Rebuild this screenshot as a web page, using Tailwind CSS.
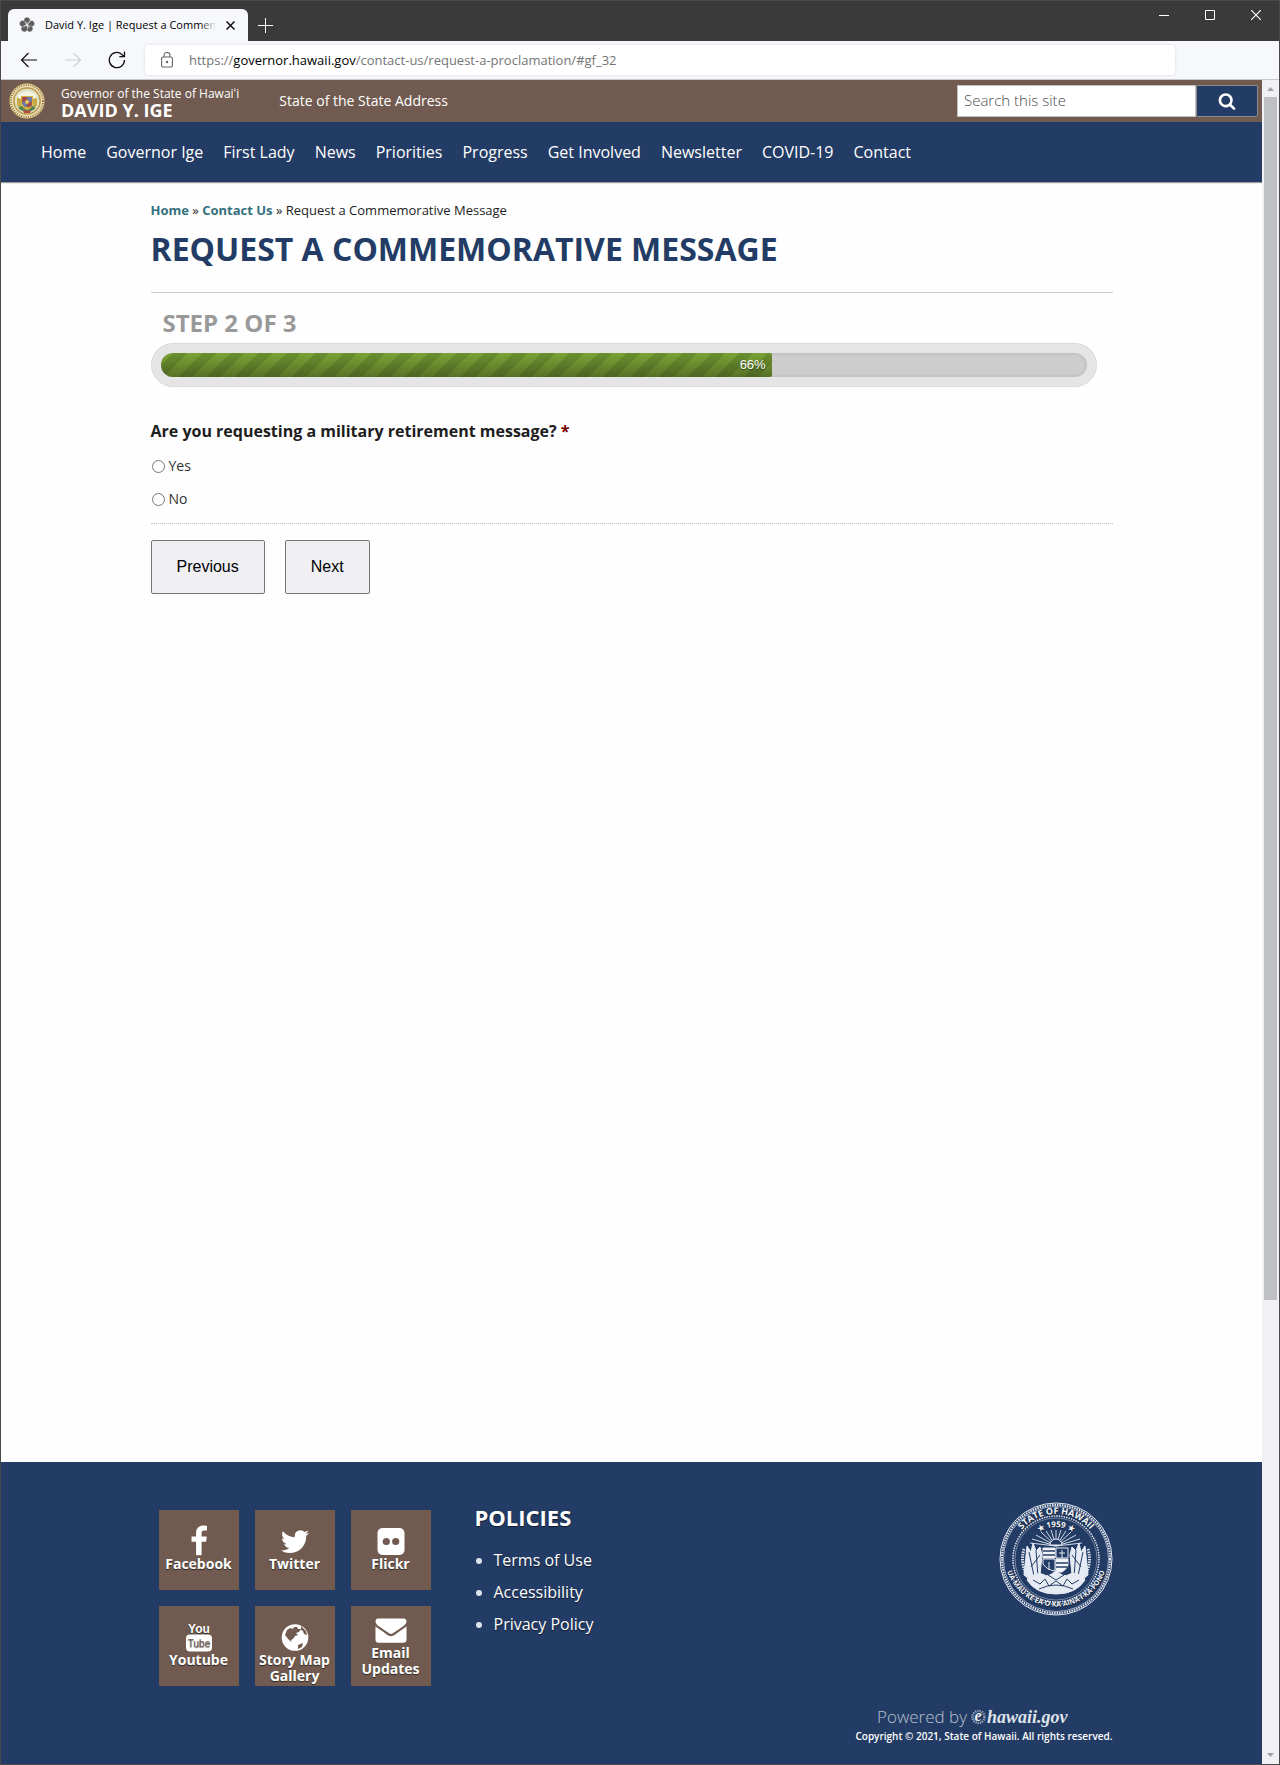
<!DOCTYPE html>
<html lang="en">
<head>
<meta charset="utf-8">
<meta name="viewport" content="width=device-width, initial-scale=1">
<title>David Y. Ige | Request a Commemorative Message</title>
<script src="https://cdn.jsdelivr.net/npm/@tailwindcss/browser@4"></script>
</head>
<body class="flex min-h-screen flex-col border border-[#4a4a4a] bg-[#fefefe] font-['Open_Sans',sans-serif] text-[#1d1d1d]">

<!-- Browser tab strip -->
<div class="flex h-10 items-end justify-between bg-[#3a3a3a]">
  <div class="flex items-end pl-[7px]">
    <div class="flex h-8 w-[240px] items-center rounded-t-md bg-[#f7f8fb] pr-2 pl-[11px]">
      <svg class="size-4 shrink-0" viewBox="0 0 16 16" fill="#5c5c5c" aria-hidden="true">
        <g stroke="#f7f8fb" stroke-width=".3">
          <ellipse cx="8" cy="3.900" rx="3.200" ry="3.600"/>
          <ellipse cx="8" cy="3.900" rx="3.200" ry="3.600" transform="rotate(72 8 8)"/>
          <ellipse cx="8" cy="3.900" rx="3.200" ry="3.600" transform="rotate(144 8 8)"/>
          <ellipse cx="8" cy="3.900" rx="3.200" ry="3.600" transform="rotate(216 8 8)"/>
          <ellipse cx="8" cy="3.900" rx="3.200" ry="3.600" transform="rotate(288 8 8)"/>
        </g>
        <path d="M8 8 12 3.500M8 8l-2-3M8 8l3 2M8 8 4.500 9M8 8l1 3.500" stroke="#f7f8fb" stroke-width=".8"/>
      </svg>
      <div class="relative ml-[10px] min-w-0 flex-1 overflow-hidden text-[11px] leading-4 whitespace-nowrap text-black">
        David Y. Ige | Request a Commemorative Message
        <span class="absolute inset-y-0 right-0 w-4 bg-linear-to-r from-transparent to-[#f7f8fb]"></span>
      </div>
      <button class="ml-1 flex size-5 items-center justify-center" aria-label="Close tab">
        <svg class="size-[9px]" viewBox="0 0 9 9" stroke="#111" stroke-width="1.500"><path d="M.5.5l8 8M8.500.5l-8 8"/></svg>
      </button>
    </div>
    <button class="ml-px flex size-8 items-center justify-center" aria-label="New tab">
      <svg class="size-[15px]" viewBox="0 0 15 15" stroke="#fff"><path d="M7.500 0v15M0 7.500h15"/></svg>
    </button>
  </div>
  <div class="flex h-full items-start">
    <button class="flex h-7 w-[46px] items-center justify-center" aria-label="Minimize">
      <svg class="size-[10px]" viewBox="0 0 10 10" stroke="#fff"><path d="M0 5.500h10"/></svg>
    </button>
    <button class="flex h-7 w-[46px] items-center justify-center" aria-label="Maximize">
      <svg class="size-[10px]" viewBox="0 0 10 10" stroke="#fff" fill="none"><path d="M.5.5h9v9h-9z"/></svg>
    </button>
    <button class="flex h-7 w-[46px] items-center justify-center" aria-label="Close window">
      <svg class="size-[10px]" viewBox="0 0 10 10" stroke="#fff" stroke-width="1.200"><path d="M0 0l10 10M10 0 0 10"/></svg>
    </button>
  </div>
</div>

<!-- Address bar -->
<div class="flex h-[39px] items-center border-b border-[#c8c9cb] bg-[#f7f8fb]">
  <div class="flex items-center pl-[6px]">
    <button class="flex w-11 justify-center" aria-label="Back">
      <svg class="h-4 w-[18px]" viewBox="0 0 18 16" fill="none" stroke="#111" stroke-width="1.200"><path d="M17 8H1.500M8.500 1l-7 7 7 7"/></svg>
    </button>
    <button class="flex w-11 justify-center" aria-label="Forward" disabled>
      <svg class="h-4 w-[18px]" viewBox="0 0 18 16" fill="none" stroke="#cfd0d3" stroke-width="1.200"><path d="M1 8h15.500M9.500 1l7 7-7 7"/></svg>
    </button>
    <button class="flex w-11 justify-center" aria-label="Refresh">
      <svg class="size-[18px]" viewBox="0 0 18 18" fill="none" stroke="#111" stroke-width="1.300"><path d="M16.500 9A7.600 7.600 0 1 1 13.700 3.200l2.300 2.300M16.500.5v5.200h-5.200"/></svg>
    </button>
  </div>
  <div class="ml-[6px] flex h-[30px] flex-1 items-center rounded bg-white pl-4 shadow-[0_0_3px_rgba(0,0,0,0.12)]">
    <svg class="h-4 w-3" viewBox="0 0 12 16" fill="none" stroke="#666" stroke-width="1.100" aria-hidden="true"><rect x=".6" y="5" width="10.800" height="10" rx="1.500"/><path d="M3 5V3.500a3 3 0 0 1 6 0V5"/><circle cx="6" cy="10" r=".7" fill="#555"/></svg>
    <div class="ml-4 pt-px text-[13px] whitespace-nowrap text-[#757575]">https://<span class="text-black">governor.hawaii.gov</span>/contact-us/request-a-proclamation/#gf_32</div>
  </div>
  <div class="w-[104px]"></div>
</div>

<div class="flex flex-1">
<div class="flex min-w-0 flex-1 flex-col">

  <header>
    <div class="flex h-[42px] items-center justify-between bg-[#715b50] pr-1 pl-2 text-white">
      <div class="flex items-center">
        <svg class="size-9" viewBox="0 0 36 36" role="img" aria-label="State seal">
          <circle cx="18" cy="18" r="17.700" fill="#cda863"/>
          <circle cx="18" cy="18" r="15.500" fill="none" stroke="#efe2b8" stroke-width="3"/>
          <circle cx="18" cy="18" r="16" fill="none" stroke="#8a7340" stroke-width="1.800" stroke-dasharray="1 1.300"/>
          <circle cx="18" cy="18" r="13" fill="#dfe3c4" stroke="#b5903e"/>
          <path d="M8 13q10-9 20 0l-4 3H12z" fill="#f6f4e4"/>
          <path d="M8 15l4 1v9l-4-2zM28 15l-4 1v9l4-2z" fill="#c9a646"/>
          <path d="M9 25q9 8 18 0l-3-2H12z" fill="#58834e"/>
          <path d="M12 13h12v8q-2 5-6 6-4-1-6-6z" fill="#d8b13c"/>
          <path d="M13 14h5v5h-5zM18 19h5v3l-2 2h-3z" fill="#a14e4c"/>
          <path d="M18 14h5v5h-5zM13 19h5v5h-2l-3-3z" fill="#6c7bab"/>
          <circle cx="18" cy="19" r="2" fill="#e8c556"/>
          <path d="M14 27l4 1 4-1-1 3h-6z" fill="#b94b45"/>
        </svg>
        <div class="ml-4 pt-px leading-4 whitespace-nowrap">
          <div class="text-xs leading-4">Governor of the State of Hawaiʻi</div>
          <div class="text-lg leading-4 font-bold">DAVID Y. IGE</div>
        </div>
        <a href="#" class="ml-10 text-sm font-medium whitespace-nowrap">State of the State Address</a>
      </div>
      <form class="flex h-8">
        <input type="search" aria-label="Search this site" placeholder="Search this site" class="w-[239px] border border-[#c2c2c2] bg-white px-[6px] pb-[2px] text-[15px] font-light text-black placeholder:text-[#4d4d4d]">
        <button type="button" aria-label="Search" class="flex w-[62px] items-center justify-center rounded-xs border border-[#8b8b8b] bg-[#233c65]">
          <svg class="size-[18px]" viewBox="0 0 1792 1792" fill="#fff"><path d="M1216 832q0-185-131.500-316.500t-316.500-131.500-316.500 131.500-131.500 316.500 131.500 316.500 316.500 131.500 316.500-131.500 131.500-316.500zm512 832q0 52-38 90t-90 38q-54 0-90-38l-343-342q-179 124-399 124-143 0-273.500-55.500t-225-150-150-225-55.500-273.500 55.500-273.500 150-225 225-150 273.500-55.500 273.500 55.500 225 150 150 225 55.500 273.500q0 220-124 399l343 343q37 37 37 90z"/></svg>
        </button>
      </form>
    </div>
    <nav class="flex h-[60px] items-center gap-5 bg-[#233c65] px-10 text-base whitespace-nowrap text-white shadow-[0_1px_1px_#999]">
      <a href="#">Home</a>
      <a href="#">Governor Ige</a>
      <a href="#">First Lady</a>
      <a href="#">News</a>
      <a href="#">Priorities</a>
      <a href="#">Progress</a>
      <a href="#">Get Involved</a>
      <a href="#">Newsletter</a>
      <a href="#">COVID-19</a>
      <a href="#">Contact</a>
    </nav>
  </header>

  <main class="mx-auto w-full max-w-[962px] flex-1 pt-[18px]">
    <div class="text-[13px] leading-5"><a href="#" class="font-bold text-[#35707f]">Home</a> » <a href="#" class="font-bold text-[#35707f]">Contact Us</a> » Request a Commemorative Message</div>
    <h1 class="mt-[7px] border-b border-[#cacaca] pb-[21px] text-[32px] leading-[44px] font-bold text-[#233c65]">REQUEST A COMMEMORATIVE MESSAGE</h1>
    <form>
      <h2 class="mt-[14px] ml-3 text-2xl leading-8 font-bold text-[#999]">STEP 2 OF 3</h2>
      <div class="mt-1 mr-4 rounded-full border border-[#d9dad9] bg-[#e4e5e4] p-[9px]">
        <div class="h-6 overflow-hidden rounded-full bg-[#cccdcc] shadow-[inset_0_0_2px_2px_rgba(0,0,0,0.05)]">
          <div class="flex h-full items-center justify-end rounded-r-xs bg-[linear-gradient(to_bottom,transparent,rgba(0,0,0,0.3)),repeating-linear-gradient(-45deg,#7ba336_0px,#7ba336_10px,#6c9030_10px,#6c9030_20px)] pr-[6px] font-['Liberation_Sans',sans-serif] text-[13px] text-white text-shadow-[0_1px_1px_rgba(0,0,0,0.5)]" style="width:66%">66%</div>
        </div>
      </div>
      <fieldset class="mt-8 border-b border-dotted border-[#c0c0c0] pb-[14px]">
        <legend class="text-base leading-6 font-bold">Are you requesting a military retirement message? <span class="text-[#790000]">*</span></legend>
        <div class="mt-3 flex flex-col gap-3 text-sm leading-[21px] text-[#333]">
          <label class="flex items-center gap-1"><input type="radio" name="military" class="mt-[2px] ml-px size-[13px]">Yes</label>
          <label class="flex items-center gap-1"><input type="radio" name="military" class="mt-[2px] ml-px size-[13px]">No</label>
        </div>
      </fieldset>
      <div class="mt-4 flex gap-5 font-['Liberation_Sans',sans-serif] text-base text-black">
        <button type="button" class="h-[54px] rounded-xs border border-[#767676] bg-[#efeff4] px-[25px]">Previous</button>
        <button type="button" class="h-[54px] rounded-xs border border-[#767676] bg-[#efeff4] px-[25px]">Next</button>
      </div>
    </form>
  </main>

  <footer class="bg-[#233c65] pb-[22px] text-white text-shadow-[0_1px_1px_rgba(0,0,0,0.6)]">
    <div class="mx-auto max-w-[962px]">
      <div class="flex items-start pt-10">
        <div class="mt-2 ml-2 grid grid-cols-3 gap-4 text-center text-sm leading-4 font-bold">
          <a href="#" class="flex size-20 flex-col items-center bg-[#715b50] pt-[14px]">
            <svg class="size-8" viewBox="0 0 1792 1792" fill="#fff" aria-hidden="true"><path transform="translate(0 90)" d="M1343 12v264h-157q-86 0-116 36t-30 108v189h293l-39 296h-254v759h-306v-759h-255v-296h255v-218q0-186 104-288.500t277-102.500q147 0 228 12z"/></svg>
            Facebook</a>
          <a href="#" class="flex size-20 flex-col items-center bg-[#715b50] pt-[14px]">
            <svg class="size-8" viewBox="0 0 1792 1792" fill="#fff" aria-hidden="true"><path transform="translate(0 90)" d="M1684 408q-67 98-162 167 1 14 1 42 0 130-38 259.500t-115.500 248.500-184.500 210.500-258 146-323 54.500q-271 0-496-145 35 4 78 4 225 0 401-138-105-2-188-64.500t-114-159.500q33 5 61 5 43 0 85-11-112-23-185.500-111.500t-73.500-205.500v-4q68 38 146 41-66-44-105-115t-39-154q0-88 44-163 121 149 294.500 238.500t371.500 99.500q-8-38-8-74 0-134 94.500-228.500t228.500-94.500q140 0 236 102 109-21 205-78-37 115-142 178 93-10 186-50z"/></svg>
            Twitter</a>
          <a href="#" class="flex size-20 flex-col items-center bg-[#715b50] pt-[14px]">
            <svg class="size-8" viewBox="0 0 32 32" fill="#fff" aria-hidden="true"><rect x="2.500" y="4" width="27" height="27" rx="5"/><circle cx="11.300" cy="17.500" r="3.600" fill="#715b50"/><circle cx="20.700" cy="17.500" r="3.600" fill="#715b50"/></svg>
            Flickr</a>
          <a href="#" class="flex size-20 flex-col items-center bg-[#715b50] pt-[14px]">
            <svg class="size-8" viewBox="0 0 32 32" aria-hidden="true"><text x="16" y="13" text-anchor="middle" font-family="Liberation Sans" font-weight="700" font-size="12" fill="#fff">You</text><rect x="3" y="14.500" width="26" height="17" rx="4" fill="#fff"/><text x="16" y="27" text-anchor="middle" font-family="Liberation Sans" font-weight="400" font-size="10" fill="#715b50">Tube</text></svg>
            Youtube</a>
          <a href="#" class="flex size-20 flex-col items-center bg-[#715b50] pt-[14px]">
            <svg class="size-8" viewBox="0 0 32 32" aria-hidden="true"><circle cx="16" cy="17.500" r="13.300" fill="#fff"/><path d="M8 10l3-2 3 1 1-2 3 0 1 2 3 0-2 3-3 1 2 2-3 1-2 3-2 1 1 2-3-2-4-5z" fill="#715b50"/><path d="M22 6l5 5 1 4-3-1-1-3-2-1z" fill="#715b50"/><path d="M19 25l5-2-1 4-4 2z" fill="#715b50"/></svg>
            Story Map Gallery</a>
          <a href="#" class="flex size-20 flex-col items-center bg-[#715b50] pt-2">
            <svg class="h-[31px] w-8 shrink-0" viewBox="0 0 1792 1792" fill="#fff" aria-hidden="true"><path d="M1792 710v794q0 66-47 113t-113 47h-1472q-66 0-113-47t-47-113v-794q44 49 101 87 362 246 497 345 57 42 92.500 65.500t94.500 48 110 24.500h2q51 0 110-24.500t94.500-48 92.500-65.500q170-123 498-345 57-39 100-87zm0-294q0 79-49 151t-122 123q-376 261-468 325-10 7-42.500 31t-54 38.500-52 32.500-57.500 27-50 9h-2q-23 0-50-9t-57.500-27-52-32.500-54-38.500-42.500-31q-91-64-262-182.500t-205-142.500q-62-42-117-115.500t-55-136.500q0-78 41.500-130t118.500-52h1472q65 0 112.500 47t47.500 113z"/></svg>
            Email Updates</a>
        </div>
        <div class="ml-11">
          <h2 class="text-[22px] leading-[30px] font-bold">POLICIES</h2>
          <ul class="mt-3 list-disc pl-[19px] text-base leading-8 marker:text-[#dfe3ee]">
            <li><a href="#">Terms of Use</a></li>
            <li><a href="#">Accessibility</a></li>
            <li><a href="#">Privacy Policy</a></li>
          </ul>
        </div>
        <svg class="ml-auto size-[114px]" viewBox="0 0 114 114" fill="none" stroke="#e6eaf2" role="img" aria-label="Seal of the State of Hawaii">
          <defs>
            <path id="arcTop" d="M12 57a45 45 0 0 1 90 0"/>
            <path id="arcYear" d="M25 57a32 32 0 0 1 64 0"/>
            <path id="arcBottom" d="M6 46a51.500 51.500 0 1 0 102 0"/>
          </defs>
          <circle cx="57" cy="57" r="56" stroke-width="1"/>
          <circle cx="57" cy="57" r="54" stroke-width="2" stroke-dasharray="1.500 1"/>
          <circle cx="57" cy="57" r="52.500" stroke-width=".6"/>
          <circle cx="57" cy="57" r="43" stroke-width="1.500" stroke-dasharray="1.500 1"/>
          <circle cx="57" cy="57" r="41" stroke-width=".4"/>
          <g fill="#f2f4f8" stroke="none" font-family="Open Sans, sans-serif" font-weight="700">
            <text font-size="9"><textPath href="#arcTop" startOffset="50%" text-anchor="middle">STATE  OF  HAWAII</textPath></text>
            <text font-size="8"><textPath href="#arcYear" startOffset="50%" text-anchor="middle">★ 1959 ★</textPath></text>
            <text font-size="7"><textPath href="#arcBottom" startOffset="50%" text-anchor="middle">UA·MAU·KE·EA·O·KA·AINA·I·KA·PONO</textPath></text>
          </g>
          <path d="M57 44 33 37M57 44 37 33M57 44 42 30M57 44 47 29M57 44 52 28M57 44V28M57 44l5-16M57 44l10-15M57 44l15-14M57 44l20-11M57 44l24-7M57 44 31 41M57 44l26-3" stroke-width=".9"/>
          <path d="M51 43a6 6 0 0 1 12 0z" fill="#233c65"/>
          <path d="M44 46h12v10H44zM57 57h12v6q-2 5-6 7h-6z" fill="#f2f4f8"/>
          <path d="M44 49h12M44 53h12M57 61h12M57 65h11" stroke="#233c65" stroke-width="1.300"/>
          <path d="M57 46h12v10H57zM44 57h12v12q-8-1-12-7zM63 48v8M50 60v8M60 51h6" fill="#233c65"/>
          <path d="M28 44l4 6 2-9 3 8 4-4 2 8-2 20-7 6-9-6zM86 44l-4 6-2-9-3 8-4-4-2 8 2 20 7 6 9-6z" fill="#e6eaf2"/>
          <path d="M30 50l5 24M37 48l2 27M32 65l9-12M84 50l-5 24M77 48l-2 27M82 65l-9-12" stroke="#233c65" stroke-width="1"/>
          <path d="M25 47q-5 17 7 33M89 47q5 17-7 33" stroke-width="3" stroke-dasharray="1.500 1"/>
          <path d="M28 78q8-8 15-6 5 3 8 1l6-4 6 4q4 2 8-1 8-3 15 6-9 14-29 14T28 78z" fill="#e6eaf2"/>
          <path d="M34 78l7 4 5-5 4 7 7-5 7 5 4-7 5 5 7-4M40 87q17-8 34 0M49 73l8 5 8-5" stroke="#233c65" stroke-width="1"/>
          <path d="M42 88q15 5 30 0" stroke-width="3" stroke-dasharray="3 1.500"/>
        </svg>
      </div>
      <div class="mt-[22px] text-right">
        <div class="flex h-[18px] items-center justify-end pr-[45px] text-[17px] leading-[18px] text-[#b8c0d0] text-shadow-none">
          <span class="font-light">Powered by</span>
          <a href="#" class="ml-1 flex items-center font-['Liberation_Serif',serif] text-lg leading-[18px] font-bold text-[#dfe3ea] italic">
            <svg class="size-4" viewBox="0 0 16 16" aria-hidden="true"><circle cx="7.500" cy="8" r="6" fill="none" stroke="#9fabc0" stroke-width="2.500" stroke-dasharray="1.200 1"/><text x="3.500" y="12" font-size="16" fill="#eef0f5">e</text></svg>hawaii.gov</a>
        </div>
        <p class="mt-1 text-[10px] leading-3 font-semibold text-shadow-none">Copyright © 2021, State of Hawaii. All rights reserved.</p>
      </div>
    </div>
  </footer>
</div>

<!-- Page scrollbar -->
<div class="flex w-[17px] flex-col items-center bg-[#f0f0f5]" aria-hidden="true">
  <svg class="h-[17px] w-full shrink-0" viewBox="0 0 17 17" fill="#a3a3a3"><path d="M5 11h7L8.500 7z"/></svg>
  <div class="w-[13px] bg-[#bfc0c2]" style="flex:1203"></div>
  <div style="flex:447"></div>
  <svg class="h-[17px] w-full shrink-0" viewBox="0 0 17 17" fill="#a3a3a3"><path d="M5 6h7l-3.500 4z"/></svg>
</div>
</div>
</body>
</html>
